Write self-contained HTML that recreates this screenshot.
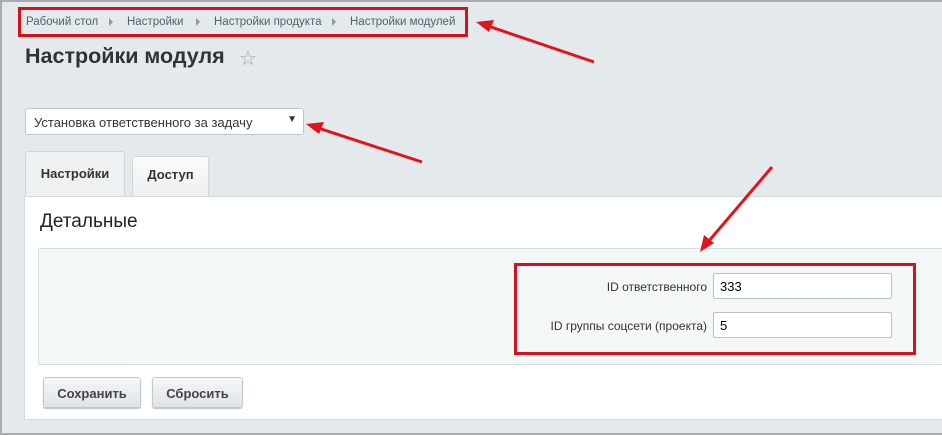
<!DOCTYPE html>
<html><head><meta charset="utf-8"><style>
*{margin:0;padding:0;box-sizing:border-box}
body{width:942px;height:435px;overflow:hidden;background:#e4eaec;font-family:"Liberation Sans",sans-serif;position:relative}
.frame{position:absolute;left:0;top:0;width:942px;height:435px;border:2px solid #a9acae;border-right:none}
.bc{position:absolute;left:18px;top:7px;width:450px;height:30px;border:3px solid #d8101b}
.bci{position:absolute;top:16px;font-size:11.5px;color:#525f6e}
.sep{position:absolute;top:18px;width:0;height:0;border-left:4px solid #8d979f;border-top:4px solid transparent;border-bottom:4px solid transparent}
h1{position:absolute;left:25px;top:44px;font-size:21.5px;font-weight:bold;color:#2f3337}
.star{position:absolute;left:239px;top:46px;font-size:20px;color:#9aa3aa}
.sel{position:absolute;left:25px;top:108px;width:279px;height:27px;background:#fff;border:1px solid #bfc6cb;border-radius:3px;font-size:13px;color:#333;padding:6px 0 0 8px}
.sel span{position:absolute;right:6px;top:5px;font-size:10px}
.tab{position:absolute;height:40px;border:1px solid #cfd5d8;border-bottom:none;border-radius:3px 3px 0 0;font-size:13px;font-weight:bold;color:#333;text-align:center;padding-top:12px}
.panel{position:absolute;left:24px;top:196px;width:920px;height:224px;background:#fff;border:1px solid #d2d8dc}
.h2{position:absolute;left:40px;top:211px;font-size:19px;color:#222}
.inner{position:absolute;left:38px;top:248px;width:904px;height:117px;background:#f4f7f8;border-top:1px solid #d8dde0;border-bottom:1px solid #d8dde0;border-left:1px solid #dfe3e5}
.lbl{position:absolute;font-size:12px;color:#333;text-align:right;right:235px}
.inp{position:absolute;left:713px;width:179px;height:26px;background:#fff;border:1px solid #b9c2c7;border-radius:2px;font-size:13px;padding:5px 6px}
.redbox{position:absolute;left:514px;top:263px;width:402px;height:92px;border:3px solid #d8101b}
.btn{position:absolute;top:377px;height:31px;border:1px solid #c3cace;border-radius:3px;background:linear-gradient(#f5f7f8,#dfe4e7);font-size:13px;font-weight:bold;color:#444;text-align:center;padding-top:8px;box-shadow:0 1px 1px #b9c0c4}
</style></head><body>
<div class="frame"></div>
<div class="bc"></div>
<div class="bci" style="left:26px">Рабочий стол</div><div class="sep" style="left:109px"></div>
<div class="bci" style="left:127px">Настройки</div><div class="sep" style="left:196px"></div>
<div class="bci" style="left:214px">Настройки продукта</div><div class="sep" style="left:332px"></div>
<div class="bci" style="left:350px">Настройки модулей</div>
<h1>Настройки модуля</h1><div class="star">☆</div>
<div class="sel">Установка ответственного за задачу<span>▼</span></div>
<div class="tab" style="left:25px;top:151px;width:100px;height:46px;background:#eef1f2;padding-top:14px">Настройки</div>
<div class="tab" style="left:132px;top:156px;width:77px;background:linear-gradient(#fbfbfb,#eceff0);padding-top:10px">Доступ</div>
<div class="panel"></div>
<div class="h2">Детальные</div>
<div class="inner"></div>
<div class="lbl" style="top:280px">ID ответственного</div>
<div class="inp" style="top:273px">333</div>
<div class="lbl" style="top:319px">ID группы соцсети (проекта)</div>
<div class="inp" style="top:312px">5</div>
<div class="redbox"></div>
<div class="btn" style="left:43px;width:98px">Сохранить</div>
<div class="btn" style="left:152px;width:91px">Сбросить</div>
<svg width="942" height="435" style="position:absolute;left:0;top:0">
<g stroke="#e0141c" stroke-width="3" fill="#e0141c">
<line x1="594" y1="62" x2="488" y2="26"/><polygon points="476,22 494,20 489,32" stroke="none"/>
<line x1="422" y1="162" x2="318" y2="128"/><polygon points="306,124 324,122 319,134" stroke="none"/>
<line x1="772" y1="167" x2="708" y2="242"/><polygon points="700,252 704,235 714,243" stroke="none"/>
</g></svg>
</body></html>
